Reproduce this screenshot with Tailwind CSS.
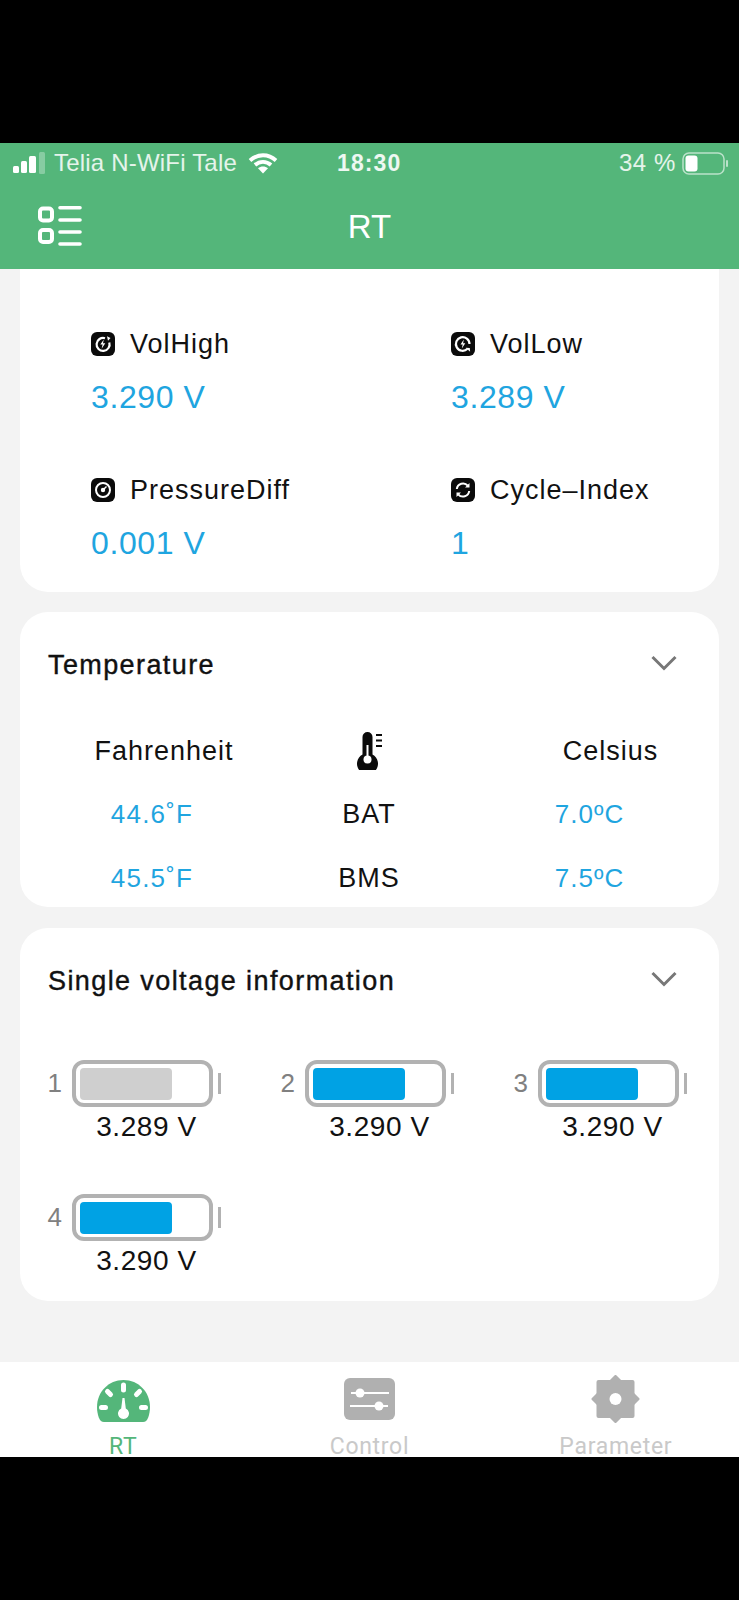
<!DOCTYPE html>
<html lang="en">
<head>
    <meta charset="UTF-8">
    <meta name="viewport" content="width=device-width, initial-scale=1.0">
    <title>RT</title>
    <script src="https://cdn.jsdelivr.net/npm/@tailwindcss/browser@4"></script>
</head>
<body class="bg-black font-['Liberation_Sans',sans-serif] w-[739px] h-[1600px] overflow-hidden">
    <div class="h-[143px] bg-black"></div>

    <header class="h-[126px] bg-[#54b67a] text-white">
        <div class="flex items-center h-[40px] pl-[13px] relative text-[24px] text-white/85">
            <svg class="w-[34px] h-[22px]" viewBox="0 0 34 22"><rect x="0" y="14" width="6" height="7" rx="1.500" fill="#fff"/><rect x="8" y="9" width="6" height="12" rx="1.500" fill="#fff"/><rect x="16" y="4" width="7" height="17" rx="1.500" fill="#fff"/><rect x="26" y="0" width="6" height="22" rx="1.500" fill="#fff" fill-opacity=".3"/></svg>
            <span class="ml-[7px] tracking-[0.2px]">Telia N-WiFi Tale</span>
            <svg class="ml-[11px] w-[30px] h-[22px]" viewBox="0 0 30 22" fill="none" stroke="#fff" stroke-width="3.800"><path d="M2 8.500c7.500-7 18.500-7 26 0"/><path d="M7 13c4.700-4.300 11.300-4.300 16 0"/><path d="M15 21.500l-5-5.300c3-2.200 7-2.200 10 0z" fill="#fff" stroke="none"/></svg>
            <span class="ml-[59px] font-bold text-white/90 text-[23px] tracking-[1.1px]">18:30</span>
            <span class="ml-auto mr-[6px] tracking-[0.6px]">34 %</span>
            <svg class="w-[47px] h-[23px] mr-[10px]" viewBox="0 0 47 23" fill="none"><rect x="1" y="1" width="41" height="21" rx="6" stroke="#fff" stroke-opacity=".6" stroke-width="1.500"/><rect x="3.500" y="3.500" width="12" height="16" rx="3" fill="#fff"/><rect x="44" y="8" width="2" height="7" rx="1" fill="#fff" fill-opacity=".6"/></svg>
        </div>
        <div class="relative flex items-center justify-center h-[86px]">
            <svg class="absolute left-[38px] top-[23px] w-[44px] h-[40px]" viewBox="0 0 44 40" fill="none" stroke="#fff" stroke-linecap="round"><g stroke-width="4"><rect x="2" y="2.500" width="12" height="12" rx="3"/><rect x="2" y="24" width="12" height="12" rx="3"/></g><path d="M22 1.800h20M22 14h20M22 26h20M22 38h20" stroke-width="3.600"/></svg>
            <h1 class="text-[33px] leading-none">RT</h1>
        </div>
    </header>

    <main class="h-[1093px] bg-[#f3f3f3] px-[20px] flex flex-col">
        <section class="bg-white rounded-b-[28px] pt-[63px] pb-[29px] pl-[71px] grid grid-cols-[360px_1fr] gap-y-[61px]">
            <div>
                <div class="flex items-center h-[24px]">
                    <svg class="w-[24px] h-[24px]" viewBox="0 0 24 24"><rect width="24" height="24" rx="6" fill="#0b0b0b"/><path d="M14 6.200a6.500 6.500 0 1 0 4.300 4.300" fill="none" stroke="#fff" stroke-width="2.200"/><path d="M12.800 7.500l-3.500 5h2.300l-1 4.200 3.700-5.500h-2.300z" fill="#fff"/><path d="M16 4.200l3.500 1.800-2.500 2.800z" fill="#fff"/></svg>
                    <span class="ml-[15px] text-[27px] leading-none tracking-[1px] text-[#111]">VolHigh</span>
                </div>
                <div class="mt-[21px] h-[40px] leading-[40px] text-[32px] tracking-[0.6px] text-[#1fa5e0]">3.290 V</div>
            </div>
            <div>
                <div class="flex items-center h-[24px]">
                    <svg class="w-[24px] h-[24px]" viewBox="0 0 24 24"><rect width="24" height="24" rx="6" fill="#0b0b0b"/><path d="M16.500 16.800a6.800 6.800 0 1 1 2-4.800" fill="none" stroke="#fff" stroke-width="2.200"/><path d="M12.800 7.500l-3.300 5h2.200l-.9 4 3.500-5.300h-2.200z" fill="#fff"/><path d="M14.800 15.800l4 .2.300 3.800z" fill="#fff"/></svg>
                    <span class="ml-[15px] text-[27px] leading-none tracking-[1px] text-[#111]">VolLow</span>
                </div>
                <div class="mt-[21px] h-[40px] leading-[40px] text-[32px] tracking-[0.6px] text-[#1fa5e0]">3.289 V</div>
            </div>
            <div>
                <div class="flex items-center h-[24px]">
                    <svg class="w-[24px] h-[24px]" viewBox="0 0 24 24"><rect width="24" height="24" rx="6" fill="#0b0b0b"/><circle cx="12" cy="12" r="7" fill="none" stroke="#fff" stroke-width="2"/><circle cx="12" cy="12" r="2.200" fill="#fff"/><path d="M12 12l3.500-3.500" stroke="#fff" stroke-width="1.400"/></svg>
                    <span class="ml-[15px] text-[27px] leading-none tracking-[1px] text-[#111]">PressureDiff</span>
                </div>
                <div class="mt-[21px] h-[40px] leading-[40px] text-[32px] tracking-[0.6px] text-[#1fa5e0]">0.001 V</div>
            </div>
            <div>
                <div class="flex items-center h-[24px]">
                    <svg class="w-[24px] h-[24px]" viewBox="0 0 24 24"><rect width="24" height="24" rx="6" fill="#0b0b0b"/><path d="M5.800 11a6.300 6.300 0 0 1 11-3.400M18.200 13a6.300 6.300 0 0 1-11 3.400" fill="none" stroke="#fff" stroke-width="2"/><path d="M18.500 5v4.500h-4.500zM5.500 19v-4.500h4.500z" fill="#fff"/></svg>
                    <span class="ml-[15px] text-[27px] leading-none tracking-[1px] text-[#111]">Cycle–Index</span>
                </div>
                <div class="mt-[21px] h-[40px] leading-[40px] text-[32px] tracking-[0.6px] text-[#1fa5e0]">1</div>
            </div>
        </section>

        <section class="mt-[20px] bg-white rounded-[28px] pt-[37px] pb-[11px]">
            <div class="flex items-center justify-between h-[32px] pl-[28px] pr-[42px]">
                <h2 class="text-[27px] leading-none [-webkit-text-stroke:0.4px_#111] tracking-[1.4px] text-[#111]">Temperature</h2>
                <svg class="w-[26px] h-[16px] -mt-[4px]" viewBox="0 0 26 16" fill="none" stroke="#777" stroke-width="3"><path d="M1.500 2L13 13.500 24.500 2"/></svg>
            </div>
            <div class="mt-[50px] grid grid-cols-[288px_122px_1fr] items-center h-[38px] text-[27px] tracking-[1px] text-center text-[#111]">
                <div>Fahrenheit</div>
                <svg class="mx-auto w-[25px] h-[38px]" viewBox="0 0 25 38"><path d="M5.500 5a5 5 0 0 1 10 0v17.500a10.500 10.500 0 1 1-10 0z" fill="#0b0b0b"/><circle cx="10.500" cy="27.500" r="4" fill="#fff"/><rect x="9.500" y="13" width="2" height="12" fill="#fff"/><path d="M19 3h6M19 8.500h6M19 14h6" stroke="#0b0b0b" stroke-width="2"/></svg>
                <div class="pl-[72px]">Celsius</div>
            </div>
            <div class="mt-[25px] grid grid-cols-[288px_122px_1fr] items-center h-[38px] text-[26px] text-center">
                <div class="pr-[24px] tracking-[1.2px] text-[#1fa5e0]">44.6˚F</div>
                <div class="text-[27px] tracking-[1px] text-[#111]">BAT</div>
                <div class="pl-[30px] tracking-[1px] text-[#1fa5e0]">7.0ºC</div>
            </div>
            <div class="mt-[26px] grid grid-cols-[288px_122px_1fr] items-center h-[38px] text-[26px] text-center">
                <div class="pr-[24px] tracking-[1.2px] text-[#1fa5e0]">45.5˚F</div>
                <div class="text-[27px] tracking-[1px] text-[#111]">BMS</div>
                <div class="pl-[30px] tracking-[1px] text-[#1fa5e0]">7.5ºC</div>
            </div>
        </section>

        <section class="mt-[21px] bg-white rounded-[28px] pt-[37px] pb-[24px]">
            <div class="flex items-center justify-between h-[32px] pl-[28px] pr-[42px]">
                <h2 class="text-[27px] leading-none [-webkit-text-stroke:0.4px_#111] tracking-[1.4px] text-[#111]">Single voltage information</h2>
                <svg class="w-[26px] h-[16px] -mt-[4px]" viewBox="0 0 26 16" fill="none" stroke="#777" stroke-width="3"><path d="M1.500 2L13 13.500 24.500 2"/></svg>
            </div>
            <div class="mt-[63px] pl-[24px] grid grid-cols-[233px_233px_1fr] gap-y-[51px]">
                <div>
                    <div class="flex items-center">
                        <span class="w-[18px] text-right text-[26px] text-[#808080]">1</span>
                        <div class="ml-[10px] w-[141px] h-[47px] border-[4px] border-[#b2b2b2] rounded-[12px] flex items-center pl-[4px]"><div class="w-[92px] h-[32px] rounded-[4px] bg-[#cfcfcf]"></div></div>
                        <div class="ml-[5px] w-[3px] h-[21px] bg-[#b2b2b2]"></div>
                    </div>
                    <div class="mt-[4px] ml-[29px] w-[147px] text-center text-[28px] leading-[32px] tracking-[0.6px] text-[#111]">3.289 V</div>
                </div>
                <div>
                    <div class="flex items-center">
                        <span class="w-[18px] text-right text-[26px] text-[#808080]">2</span>
                        <div class="ml-[10px] w-[141px] h-[47px] border-[4px] border-[#b2b2b2] rounded-[12px] flex items-center pl-[4px]"><div class="w-[92px] h-[32px] rounded-[4px] bg-[#00a2e4]"></div></div>
                        <div class="ml-[5px] w-[3px] h-[21px] bg-[#b2b2b2]"></div>
                    </div>
                    <div class="mt-[4px] ml-[29px] w-[147px] text-center text-[28px] leading-[32px] tracking-[0.6px] text-[#111]">3.290 V</div>
                </div>
                <div>
                    <div class="flex items-center">
                        <span class="w-[18px] text-right text-[26px] text-[#808080]">3</span>
                        <div class="ml-[10px] w-[141px] h-[47px] border-[4px] border-[#b2b2b2] rounded-[12px] flex items-center pl-[4px]"><div class="w-[92px] h-[32px] rounded-[4px] bg-[#00a2e4]"></div></div>
                        <div class="ml-[5px] w-[3px] h-[21px] bg-[#b2b2b2]"></div>
                    </div>
                    <div class="mt-[4px] ml-[29px] w-[147px] text-center text-[28px] leading-[32px] tracking-[0.6px] text-[#111]">3.290 V</div>
                </div>
                <div>
                    <div class="flex items-center">
                        <span class="w-[18px] text-right text-[26px] text-[#808080]">4</span>
                        <div class="ml-[10px] w-[141px] h-[47px] border-[4px] border-[#b2b2b2] rounded-[12px] flex items-center pl-[4px]"><div class="w-[92px] h-[32px] rounded-[4px] bg-[#00a2e4]"></div></div>
                        <div class="ml-[5px] w-[3px] h-[21px] bg-[#b2b2b2]"></div>
                    </div>
                    <div class="mt-[4px] ml-[29px] w-[147px] text-center text-[28px] leading-[32px] tracking-[0.6px] text-[#111]">3.290 V</div>
                </div>
            </div>
        </section>
    </main>

    <nav class="h-[95px] bg-white grid grid-cols-3 overflow-hidden font-['Roboto',sans-serif] text-[23px] leading-[28px]">
        <div class="flex flex-col items-center text-[#54b67a] pt-[18px]">
            <svg class="w-[53px] h-[42px] shrink-0" viewBox="0 0 53 42"><path d="M26.500 0C11.500 0 0 12 0 27c0 3.500.6 7 1.800 10.500C3 40.500 4.500 42 7 42h39c2.500 0 4-1.500 5.200-4.500C52.400 34 53 30.500 53 27 53 12 41.500 0 26.500 0z" fill="#54b67a"/><g stroke="#fff" stroke-width="5" stroke-linecap="round"><path d="M26.500 5v5M10.500 11.500l3 3M42.500 11.500l-3 3M4.500 27.500h4M48.500 27.500h-4"/></g><path d="M25.500 18h2l1.300 10.500a5.500 5.500 0 1 1-4.600 0z" fill="#fff"/></svg>
            <span class="mt-[11px] tracking-[0.7px]">RT</span>
        </div>
        <div class="flex flex-col items-center text-[#c9c9c9] pt-[16px]">
            <svg class="w-[51px] h-[42px] shrink-0" viewBox="0 0 51 42"><rect width="51" height="42" rx="6" fill="#b0b0b0"/><g stroke="#fff" stroke-width="2"><path d="M7 15h38M6 28h38"/></g><circle cx="16" cy="15" r="4.500" fill="#fff"/><circle cx="35" cy="28" r="4.500" fill="#fff"/></svg>
            <span class="mt-[13px] tracking-[0.7px]">Control</span>
        </div>
        <div class="flex flex-col items-center text-[#c9c9c9] pt-[13px]">
            <svg class="w-[49px] h-[48px] shrink-0" viewBox="0 0 49 48"><rect x="5.500" y="5" width="38" height="38" rx="2" fill="#b0b0b0"/><path d="M24.500 1.500L47 24 24.500 46.500 2 24z" fill="#b0b0b0" stroke="#b0b0b0" stroke-width="3" stroke-linejoin="round"/><circle cx="24.500" cy="24" r="6" fill="#fff"/></svg>
            <span class="mt-[10px] tracking-[0.7px]">Parameter</span>
        </div>
    </nav>
</body>
</html>
